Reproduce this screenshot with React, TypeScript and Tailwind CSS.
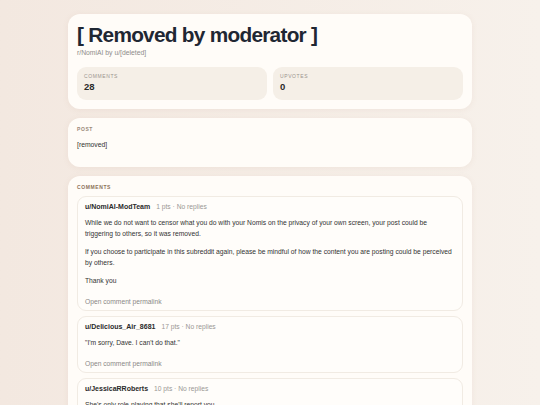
const comments = [
  {
    author: "u/NomiAI-ModTeam",
    meta: "1 pts · No replies",
    body: [
      "While we do not want to censor what you do with your Nomis on the privacy of your own screen, your post could be triggering to others, so it was removed.",
      "If you choose to participate in this subreddit again, please be mindful of how the content you are posting could be perceived by others.",
      "Thank you",
    ],
  },
  {
    author: "u/Delicious_Air_8681",
    meta: "17 pts · No replies",
    body: ["\"I'm sorry, Dave. I can't do that.\""],
  },
  {
    author: "u/JessicaRRoberts",
    meta: "10 pts · No replies",
    body: ["She's only role-playing that she'll report you."],
  },
];

function Stat({ label, value }: { label: string; value: string }) {
  return (
    <div className="flex-1 rounded-[9px] bg-[#f5efe7] px-[7px] pb-[7px] pt-[6px]">
      <div className="text-[5px] leading-[7px] uppercase tracking-[0.12em] text-[#9b958f]">{label}</div>
      <div className="mt-[1px] text-[9.5px] font-bold leading-[12px] text-[#2a2a2a]">{value}</div>
    </div>
  );
}

export default function App() {
  return (
    <div
      className="min-h-[405px] bg-gradient-to-r from-[#f3e8e0] to-[#f7f1eb] pt-[14px] pb-[20px]"
      style={{ fontFamily: '"Liberation Sans", Arial, sans-serif' }}
    >
      <div className="mx-auto flex w-[404px] flex-col gap-[9px]">
        <section className="rounded-[12px] bg-[#fffcf8] px-[9px] pb-[9px] pt-[8px] shadow-[0_1px_6px_rgba(160,120,90,0.08)]">
          <h1 className="text-[20.8px] font-bold leading-[25px] tracking-[-0.035em] text-[#1f2733]">
            [ Removed by moderator ]
          </h1>
          <p className="mt-[1px] text-[6.8px] leading-[10px] text-[#8e8c8a]">r/NomiAI by u/[deleted]</p>
          <div className="mt-[9px] flex gap-[6px]">
            <Stat label="Comments" value="28" />
            <Stat label="Upvotes" value="0" />
          </div>
        </section>

        <section className="h-[49px] rounded-[12px] bg-[#fffcf8] px-[9px] pt-[8px] shadow-[0_1px_6px_rgba(160,120,90,0.08)]">
          <div className="text-[5px] leading-[7px] font-bold uppercase tracking-[0.12em] text-[#9a8878]">Post</div>
          <p className="mt-[6px] text-[6.8px] leading-[11px] text-[#333]">[removed]</p>
        </section>

        <section className="rounded-[12px] bg-[#fffcf8] px-[9px] pt-[8px] pb-[9px] shadow-[0_1px_6px_rgba(160,120,90,0.08)]">
          <div className="text-[5px] leading-[7px] font-bold uppercase tracking-[0.12em] text-[#8d7158]">Comments</div>
          <div className="mt-[5px] flex flex-col gap-[5px]">
            {comments.map((c) => (
              <div
                key={c.author}
                className="rounded-[9px] border border-[#f1ebe3] bg-[#fffdfa] px-[7px] pb-[3px] pt-[4px]"
              >
                <div className="flex items-baseline gap-[6px] leading-[11px]">
                  <span className="text-[7px] font-bold text-[#2a2a2a]">{c.author}</span>
                  <span className="text-[6.7px] text-[#9a9794]">{c.meta}</span>
                </div>
                <div className="mt-[5px] flex flex-col gap-[7px]">
                  {c.body.map((p, i) => (
                    <p key={i} className="text-[6.72px] leading-[11px] text-[#333]">
                      {p}
                    </p>
                  ))}
                </div>
                <div className="mt-[10px] text-[6.7px] leading-[11px] text-[#8a8886]">Open comment permalink</div>
              </div>
            ))}
          </div>
        </section>
      </div>
    </div>
  );
}
